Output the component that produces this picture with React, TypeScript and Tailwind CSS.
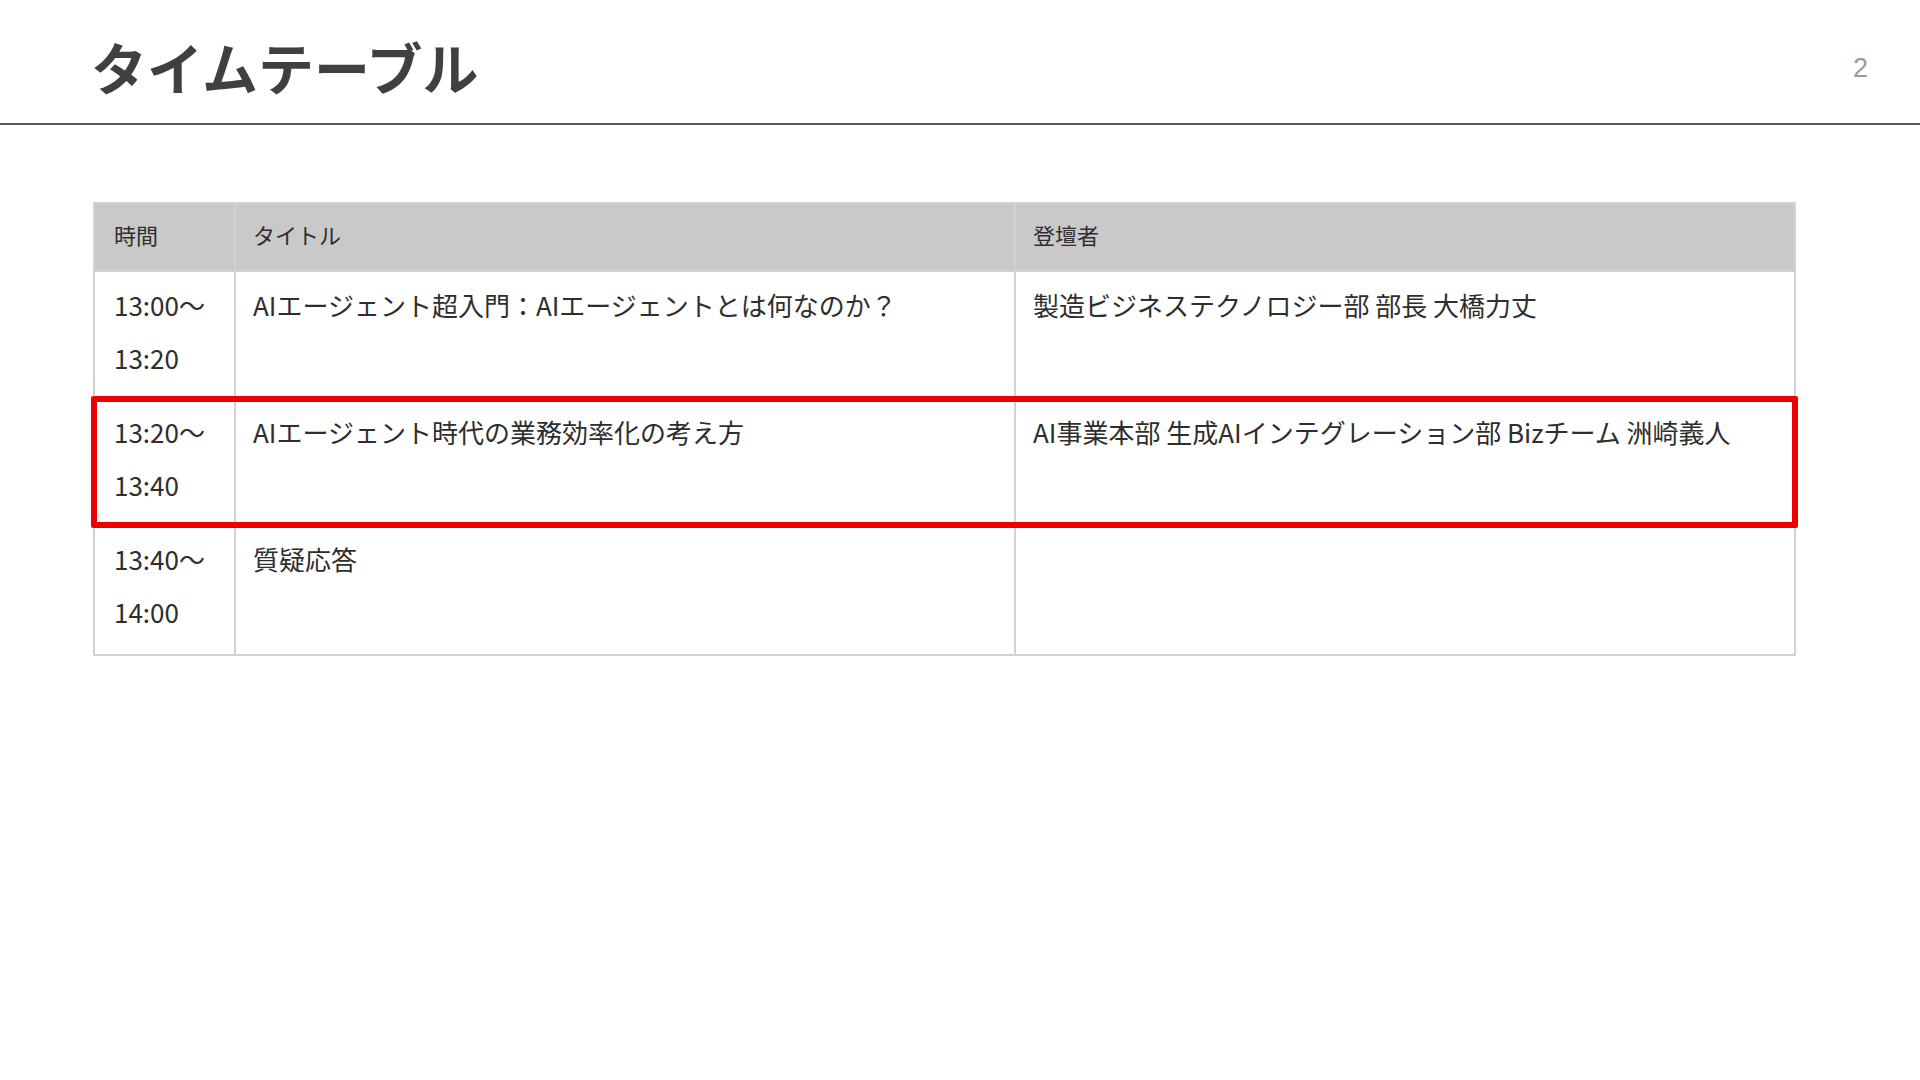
import React from "react";

const font = { fontFamily: '"Noto Sans CJK JP", "Noto Sans", sans-serif' };

type Row = { time: [string, string]; title: string; speaker: string; highlight?: boolean; pad: string };

const rows: Row[] = [
  {
    time: ["13:00〜", "13:20"],
    title: "AIエージェント超入門：AIエージェントとは何なのか？",
    speaker: "製造ビジネステクノロジー部 部長 大橋力丈",
    pad: "pb-[13px] pt-[6px]",
  },
  {
    time: ["13:20〜", "13:40"],
    title: "AIエージェント時代の業務効率化の考え方",
    speaker: "AI事業本部 生成AIインテグレーション部 Bizチーム 洲崎義人",
    highlight: true,
    pad: "pb-[14px] pt-[6px]",
  },
  {
    time: ["13:40〜", "14:00"],
    title: "質疑応答",
    speaker: "",
    pad: "pb-[16px] pt-[5px]",
  },
];

export default function App() {
  return (
    <div className="min-h-screen w-full bg-white" style={font}>
      <header className="flex h-[125px] items-center justify-between border-b-2 border-[#5a5a5a] pl-[91px] pr-[52px] pt-[8px]">
        <h1 className="text-[56px] font-bold leading-none text-[#404040]">タイムテーブル</h1>
        <span
          className="mt-[5px] text-[27px] leading-none text-[#9a9a9a]"
          style={{ fontFamily: '"Liberation Sans", Arial, sans-serif' }}
        >
          2
        </span>
      </header>

      <div className="ml-[93px] mt-[77px] w-[1703px] border-2 border-[#d2d2d2] text-[#2e2e2e]">
        <div className="grid h-[66px] grid-cols-[139px_780px_1fr] bg-[#c9c9c9] text-[22px]">
          <div className="flex items-center px-[19px] pb-[5px]">時間</div>
          <div className="flex items-center border-l-2 border-[#d2d2d2] px-[17px] pb-[5px]">タイトル</div>
          <div className="flex items-center border-l-2 border-[#d2d2d2] px-[17px] pb-[5px]">登壇者</div>
        </div>
        {rows.map((r, i) => (
          <div
            key={i}
            className="relative grid grid-cols-[139px_780px_1fr] border-t-2 border-[#d2d2d2] text-[26px] leading-[53px]"
          >
            <div className={`px-[19px] ${r.pad}`}>
              <div>{r.time[0]}</div>
              <div>{r.time[1]}</div>
            </div>
            <div className={`border-l-2 border-[#d2d2d2] px-[17px] ${r.pad}`}>{r.title}</div>
            <div className={`border-l-2 border-[#d2d2d2] px-[17px] ${r.pad}`}>{r.speaker}</div>
            {r.highlight && (
              <div className="pointer-events-none absolute -bottom-[3px] -left-[4px] -right-[4px] -top-[3px] z-10 rounded-[2px] border-[6px] border-[#ee0000]" />
            )}
          </div>
        ))}
      </div>
    </div>
  );
}
